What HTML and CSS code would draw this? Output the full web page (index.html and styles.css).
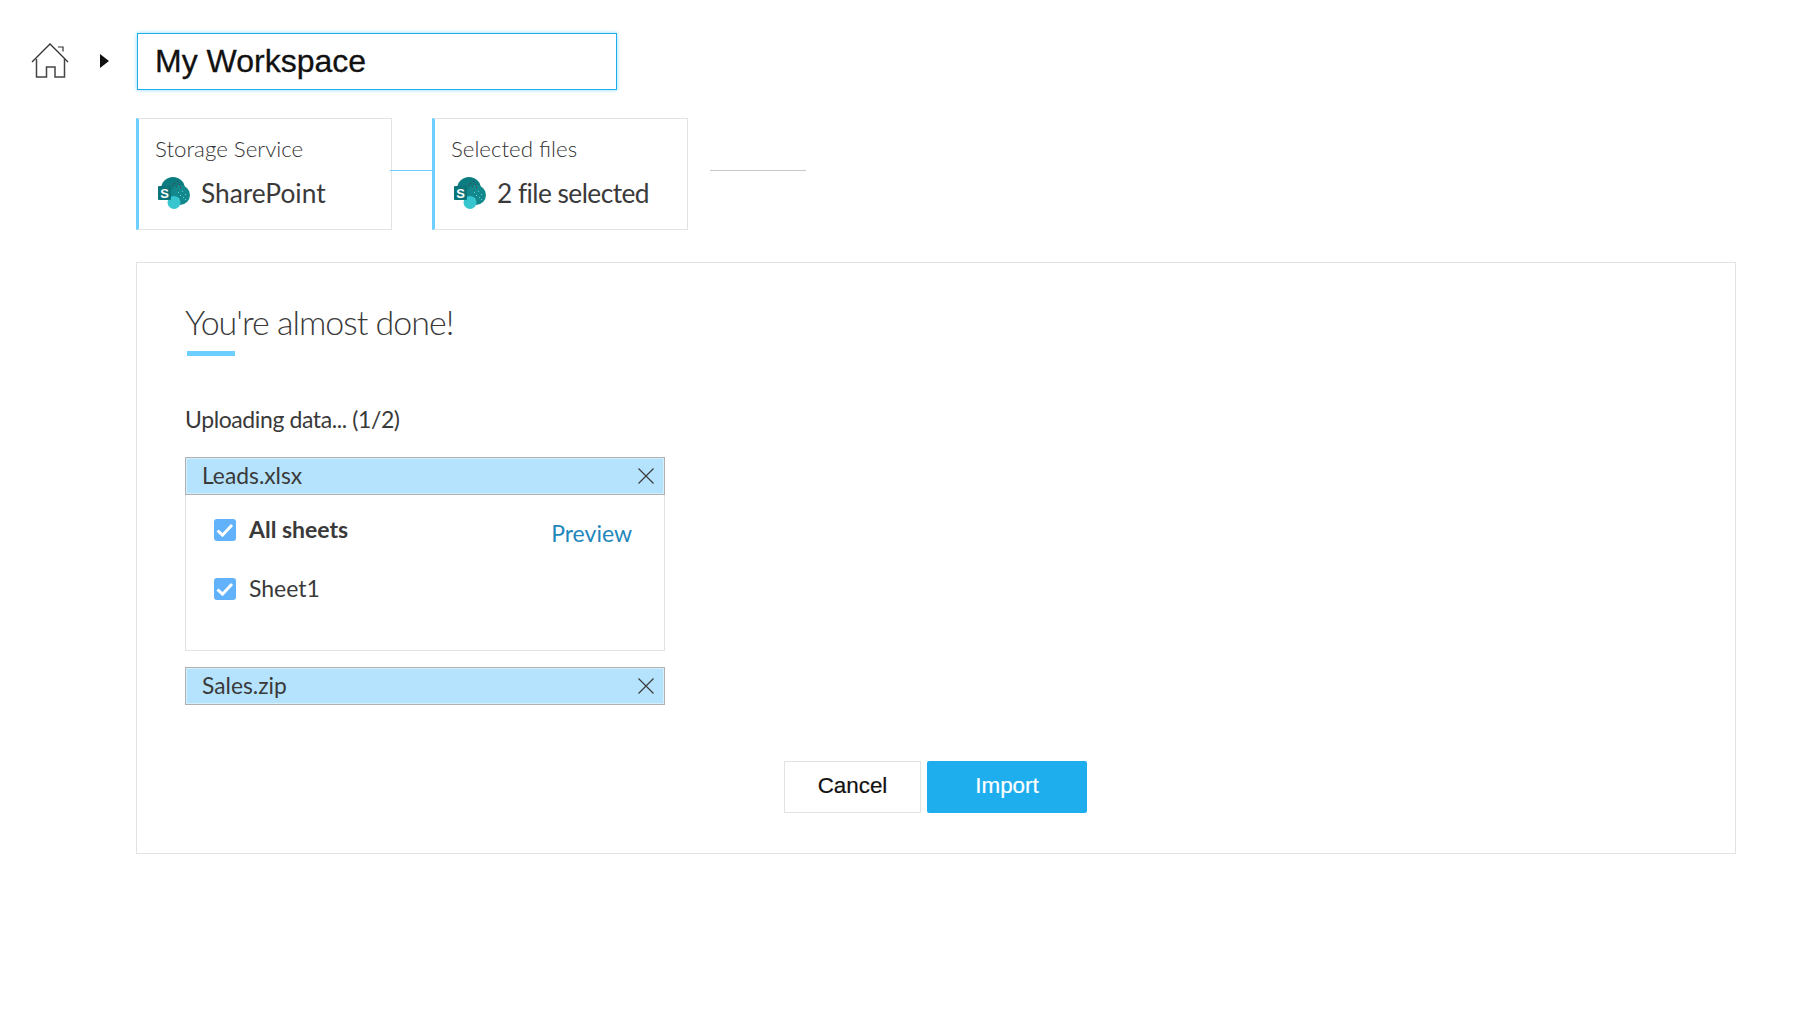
FILE: index.html
```html
<!DOCTYPE html>
<html lang="en">
<head>
<meta charset="utf-8">
<title>Import</title>
<link rel="stylesheet" href="styles.css">
</head>
<body>
<header class="topbar">
  <svg class="home" viewBox="0 0 38 36" width="38" height="36">
    <path d="M1 19L19 1l18 18" fill="none" stroke="#333" stroke-width="1.3"/>
    <path d="M27 4h5v4.500" fill="none" stroke="#333" stroke-width="1.200"/>
    <path d="M5.500 16v18h10V24h8.500v10h9.500V16" fill="none" stroke="#444" stroke-width="1.500"/>
  </svg>
  <span class="caret"></span>
  <div class="name-field">My Workspace</div>
</header>

<section class="steps">
  <div class="step">
    <div class="step-label">Storage Service</div>
    <div class="step-value">
      <svg class="sp-icon" viewBox="0 0 32 32">
        <circle cx="15" cy="12" r="12" fill="#0d7c80"/>
        <circle cx="22" cy="18" r="10" fill="#13898d"/>
        <circle cx="16" cy="25.500" r="6.500" fill="#37c6d0"/>
        <rect y="9" width="13" height="14" rx="1" fill="#0a7478"/>
        <path d="M16 6h1v1h-1zM19 4h1v1h-1zM21 7h1v1h-1zM18 9h1v1h-1zM22 10h1v1h-1zM14 8h1v1h-1z" fill="#5a3a40"/>
        <path d="M20 15h1v1h-1zM24 14h1v1h-1zM27 17h1v1h-1zM22 18h1v1h-1zM25 20h1v1h-1zM20 21h1v1h-1zM27 22h1v1h-1z" fill="#5fd0d6"/>
        <text x="6.500" y="20.500" class="sp-s">S</text>
      </svg>
      <span class="value-text">SharePoint</span>
    </div>
  </div>
  <div class="link"></div>
  <div class="step">
    <div class="step-label">Selected files</div>
    <div class="step-value">
      <svg class="sp-icon" viewBox="0 0 32 32">
        <circle cx="15" cy="12" r="12" fill="#0d7c80"/>
        <circle cx="22" cy="18" r="10" fill="#13898d"/>
        <circle cx="16" cy="25.500" r="6.500" fill="#37c6d0"/>
        <rect y="9" width="13" height="14" rx="1" fill="#0a7478"/>
        <path d="M16 6h1v1h-1zM19 4h1v1h-1zM21 7h1v1h-1zM18 9h1v1h-1zM22 10h1v1h-1zM14 8h1v1h-1z" fill="#5a3a40"/>
        <path d="M20 15h1v1h-1zM24 14h1v1h-1zM27 17h1v1h-1zM22 18h1v1h-1zM25 20h1v1h-1zM20 21h1v1h-1zM27 22h1v1h-1z" fill="#5fd0d6"/>
        <text x="6.500" y="20.500" class="sp-s">S</text>
      </svg>
      <span class="value-text tight">2 file selected</span>
    </div>
  </div>
  <div class="tail"></div>
</section>

<main class="panel">
  <h1 class="title">You're almost done!</h1>
  <div class="underline"></div>
  <p class="status">Uploading data... (1/2)</p>

  <div class="file-head">
    <span class="head-text">Leads.xlsx</span>
    <svg class="x" viewBox="0 0 18 18"><path d="M1.500 1.500l15 15M16.500 1.500l-15 15"/></svg>
  </div>
  <div class="sheets">
    <div class="sheet-row">
      <svg class="check" viewBox="0 0 22 22"><rect width="22" height="22" rx="3"/><path d="M3.500 11.500l5 4.700L18 6"/></svg>
      <strong class="row-text">All sheets</strong>
      <a class="preview">Preview</a>
    </div>
    <div class="sheet-row">
      <svg class="check" viewBox="0 0 22 22"><rect width="22" height="22" rx="3"/><path d="M3.500 11.500l5 4.700L18 6"/></svg>
      <span class="row-text">Sheet1</span>
    </div>
  </div>
  <div class="file-head file-second">
    <span class="head-text">Sales.zip</span>
    <svg class="x" viewBox="0 0 18 18"><path d="M1.500 1.500l15 15M16.500 1.500l-15 15"/></svg>
  </div>

  <div class="actions">
    <button class="btn btn-cancel">Cancel</button>
    <button class="btn btn-import">Import</button>
  </div>
</main>
</body>
</html>
```
FILE: styles.css
```css
* { box-sizing: border-box; }
html, body { margin: 0; background: #fff; }
body {
  width: 1812px;
  height: 1036px;
  overflow: hidden;
  padding: 33px 0 0 31px;
  font-family: Lato, "Liberation Sans", sans-serif;
  color: #3a3a3a;
}
.sp-s { font: 700 13px "Liberation Sans", sans-serif; fill: #fff; text-anchor: middle; }

.topbar { display: flex; align-items: center; height: 57px; }
.home { flex: none; margin-bottom: 2px; }
.caret {
  margin: 0 0 1px 31px;
  border-left: 9px solid #111;
  border-top: 7px solid transparent;
  border-bottom: 7px solid transparent;
}
.name-field {
  margin-left: 28px;
  width: 480px;
  height: 57px;
  display: flex;
  align-items: center;
  padding-left: 17px;
  border: 1px solid #1eaeee;
  box-shadow: 0 0 4px #8fd6f7;
  font: 32px "Liberation Sans", Arial, sans-serif;
  -webkit-text-stroke: 0.3px #111;
  color: #111;
}

.steps { display: flex; margin: 28px 0 0 105px; height: 112px; }
.step {
  width: 256px;
  height: 112px;
  padding: 15px 0 0 16px;
  border: 1px solid #e3e3e3;
  border-left: 3px solid #6ccfff;
}
.step-label { font-size: 22.300px; font-weight: 300; line-height: 30px; color: #333; }
.step-value {
  display: flex;
  align-items: center;
  margin-top: 12px;
  font-size: 26.300px;
  line-height: 34px;
  color: #3a3a3a;
}
.tight { letter-spacing: -0.55px; }
.sp-icon { width: 32px; height: 32px; margin: 0 11px 0 3px; flex: none; }
.link { width: 42px; height: 1px; margin: 52px 0 0 -2px; background: #6ccfff; }
.tail { width: 96px; height: 1px; margin: 52px 0 0 22px; background: #c8c8c8; }

.panel {
  margin: 32px 0 0 105px;
  width: 1600px;
  height: 592px;
  padding: 37px 48px 0;
  border: 1px solid #e3e3e3;
}
.title { margin: 0; font-size: 34px; font-weight: 300; letter-spacing: -1px; line-height: 44px; color: #3a3a3a; }
.underline { width: 48px; height: 5px; margin: 7px 0 0 2px; background: #6ccfff; }
.status { margin: 48px 0 0; font-size: 23px; letter-spacing: -0.4px; line-height: 30px; }

.file-head {
  display: flex;
  align-items: center;
  justify-content: space-between;
  width: 480px;
  height: 38px;
  margin-top: 23px;
  padding: 0 9px 0 16px;
  background: #b5e3fd;
  border: 1px solid #b0b0b0;
  box-shadow: inset 0 0 0 1px #d4effe;
  font-size: 22.800px;
}
.head-text { margin-bottom: 2px; }
.file-second { margin-top: 16px; }
.x { width: 18px; height: 18px; fill: none; stroke: #3a3a3a; stroke-width: 1.200; }
.sheets {
  width: 480px;
  height: 156px;
  padding: 21px 32px 0 28px;
  border: 1px solid #e3e3e3;
  border-top: 0;
}
.sheet-row {
  display: flex;
  align-items: center;
  height: 28px;
  margin-bottom: 31px;
  font-size: 23px;
}
.row-text { margin-bottom: 3px; }
.check { width: 22px; height: 22px; margin-right: 13px; flex: none; fill: #61b2fb; }
.check path { fill: none; stroke: #fff; stroke-width: 3; }
.preview { margin: 6px 0 0 auto; color: #1f87bb; font-size: 23px; }

.actions { display: flex; justify-content: center; gap: 6px; margin: 56px 0 0 -1px; }
.btn {
  height: 52px;
  font: 22.400px "Liberation Sans", Arial, sans-serif;
  padding: 0 0 2px;
  -webkit-text-stroke: 0.2px currentColor;
}
.btn-cancel { width: 137px; background: #fff; border: 1px solid #e3e3e3; color: #111; }
.btn-import { width: 160px; background: #1eaeee; border: 0; border-radius: 2px; color: #fff; }
```
